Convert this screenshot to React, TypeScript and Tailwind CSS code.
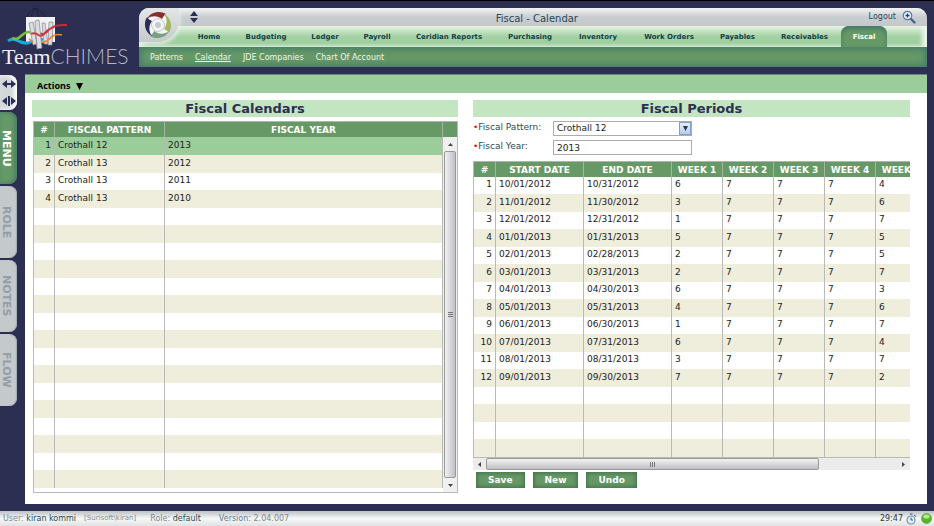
import React from "react";

const navItems = [
  "Home", "Budgeting", "Ledger", "Payroll", "Ceridian Reports", "Purchasing",
  "Inventory", "Work Orders", "Payables", "Receivables", "Fiscal",
];
const subItems = ["Patterns", "Calendar", "JDE Companies", "Chart Of Account"];
const sideTabs = ["MENU", "ROLE", "NOTES", "FLOW"];

const calendars = [
  ["Crothall 12", "2013"],
  ["Crothall 13", "2012"],
  ["Crothall 13", "2011"],
  ["Crothall 13", "2010"],
];

const periods = [
  ["10/01/2012", "10/31/2012", "6", "7", "7", "7", "4"],
  ["11/01/2012", "11/30/2012", "3", "7", "7", "7", "6"],
  ["12/01/2012", "12/31/2012", "1", "7", "7", "7", "7"],
  ["01/01/2013", "01/31/2013", "5", "7", "7", "7", "5"],
  ["02/01/2013", "02/28/2013", "2", "7", "7", "7", "5"],
  ["03/01/2013", "03/31/2013", "2", "7", "7", "7", "7"],
  ["04/01/2013", "04/30/2013", "6", "7", "7", "7", "3"],
  ["05/01/2013", "05/31/2013", "4", "7", "7", "7", "6"],
  ["06/01/2013", "06/30/2013", "1", "7", "7", "7", "7"],
  ["07/01/2013", "07/31/2013", "6", "7", "7", "7", "4"],
  ["08/01/2013", "08/31/2013", "3", "7", "7", "7", "7"],
  ["09/01/2013", "09/30/2013", "7", "7", "7", "7", "2"],
];

function Logo() {
  return (
    <div className="w-[139px] shrink-0 pt-[7px]">
      <svg className="ml-[7px] block" width="62" height="43" viewBox="0 0 62 43" fill="none">
        <path d="M28 1C23 4 20 8 19 12M28 1C26 5 24 7 24 14M28 1C31 5 32 8 32 14M28 1C34 4 38 8 39 12" stroke="#17182f" strokeWidth="0.7" />
        <rect x="19" y="10" width="29" height="25" fill="#f1f2f4" />
        <path d="M1 34C9 28 14 40 24 35S30 30 36 33" stroke="#18a8dc" strokeWidth="3" />
        <path d="M5 31C13 35 15 24 22 25S27 31 32 28" stroke="#78bd3c" strokeWidth="2.6" />
        <path d="M29 23C36 32 41 23 46 20S55 18 60 18" stroke="#c32b3b" strokeWidth="2" />
        <path d="M33 35C43 37 43 25 55 28" stroke="#ef8732" strokeWidth="1.6" />
        <g fill="#dcdde0" stroke="#85878f" strokeWidth="0.7">
          <path d="M22 16l4-1 4 22-4 1zM28 14l4-1 3 28-5 1zM35 16l3 0 3 21-4 0zM42 15l4 0-1 23-4 0z" />
        </g>
        <path d="M24 27C31 23 32 33 37 27S44 22 48 19" stroke="#cf3440" strokeWidth="2" />
        <path d="M22 32l4 3M36 35C42 35 43 30 47 28" stroke="#ef8732" strokeWidth="1.6" />
      </svg>
      <div className="-mt-[6px] flex items-baseline leading-[24px] whitespace-nowrap">
        <span className="pl-[2px] font-['Liberation_Serif',serif] text-[22px] text-[#f0f0f4]">Team</span>
        <span className="font-['Lato',sans-serif] text-[21px] font-light text-[#b5b6c0]">CHIMES</span>
      </div>
    </div>
  );
}

const swirlArms = [
  { angle: 0, color: "#84302c" },
  { angle: 90, color: "#a4b563" },
  { angle: 180, color: "#77a281" },
  { angle: 270, color: "#292c5b" },
];

function Swirl() {
  return (
    <svg width="30" height="30" viewBox="0 0 30 30">
      <circle cx="15" cy="15" r="12" fill="#f4f5f6" />
      {swirlArms.map((a) => (
        <g key={a.angle} transform={`rotate(${a.angle} 15 15)`}>
          <path d="M4 9C7 2 17 0 23 4C21 5 20 7 19 9C15 6 9 5 4 9Z" fill={a.color} />
          <path d="M10 11C13 8 17 8 19 10" fill="none" stroke="#bfc4c8" strokeWidth="1" />
        </g>
      ))}
      <circle cx="15" cy="15" r="3" fill="#c6cacd" />
    </svg>
  );
}

function Header() {
  return (
    <header className="min-w-0 flex-1 pt-[8px] pr-[7px]">
      <div className="relative overflow-hidden rounded-t-[10px] bg-[#c6cacc]">
        <div className="flex h-[18px] items-center bg-linear-to-b from-[#f3f4f4] via-[#c9cdcf] to-[#c3c8ca] pr-[11px] pl-[50px] text-[#294858]">
          <button className="flex w-[60px]" aria-label="Toggle header">
            <svg width="10" height="12" viewBox="0 0 10 12" fill="#2c2f55"><path d="M1 5L5 0l4 5zM1 7h8L5 12z" /></svg>
          </button>
          <h1 className="flex-1 pt-[3px] pr-[44px] text-center text-[10px] leading-[15px]">Fiscal - Calendar</h1>
          <a href="#logout" className="text-[8px]">Logout</a>
          <button className="ml-[6px]" aria-label="Zoom">
            <svg width="14" height="14" viewBox="0 0 14 14" fill="none">
              <path d="M9 9l3.500 3.500" stroke="#3d6685" strokeWidth="2.400" strokeLinecap="round" />
              <circle cx="5.500" cy="5.500" r="4.200" fill="#e8f2fa" stroke="#5a7d98" strokeWidth="1.200" />
              <path d="M3.500 5.500h4M5.500 3.500v4" stroke="#1f4467" strokeWidth="1.300" />
            </svg>
          </button>
        </div>
        <div className="bg-linear-to-b from-[#e3f2e2] via-[#a4d1a3] to-[#9bcd9b] pr-[40px] pl-[46px] shadow-[inset_-5px_0_4px_#eaf5ea,inset_5px_0_4px_#dfeedd]">
          <nav className="grid h-[21px] grid-cols-[48fr_66fr_52fr_52fr_92fr_70fr_66fr_76fr_61fr_73fr_46fr] text-[7px] font-bold text-[#123f49]">
            {navItems.map((n) => (
              <a
                key={n}
                href={"#" + n}
                className={
                  "flex items-center justify-center whitespace-nowrap pt-[2px] " +
                  (n === "Fiscal" ? "rounded-t-[8px] bg-[#669966] text-white shadow-[inset_0_3px_4px_#44796a]" : "")
                }
              >
                {n}
              </a>
            ))}
          </nav>
        </div>
        <div className="absolute top-0 left-0 flex h-[34px] w-[40px] items-start rounded-br-[22px] bg-linear-to-b from-[#e4e6e7] to-[#c6cacc] pt-[2px] pl-[4px] shadow-[1px_2px_4px_#e6f2e6]">
          <Swirl />
        </div>
      </div>
      <nav className="flex h-[20px] items-center gap-[12px] bg-[#669966] pt-px pl-[11px] text-[8px] text-[#edf5ec] shadow-[inset_0_0_7px_2px_#44796a]">
        {subItems.map((s) => (
          <a key={s} href={"#" + s} className={s === "Calendar" ? "underline" : ""}>{s}</a>
        ))}
      </nav>
    </header>
  );
}

function SideTabs() {
  return (
    <aside className="flex w-[25px] shrink-0 flex-col gap-[2px] pt-px pr-[8px]">
      <div className="flex h-[35px] flex-col items-center justify-around rounded-r-[8px] bg-[#d4d7da] shadow-[inset_-3px_0_4px_#ffffff]">
        <button aria-label="Resize panel">
          <svg width="14" height="10" viewBox="0 0 14 10" fill="#2c2f55"><path d="M0 5l5-4v3h4V1l5 4-5 4V6H5v3z" /></svg>
        </button>
        <button aria-label="Split panel">
          <svg width="14" height="10" viewBox="0 0 14 10" fill="#2c2f55"><path d="M0 5l5-4v8zM14 5L9 1v8zM6 0h2v10H6z" /></svg>
        </button>
      </div>
      {sideTabs.map((t) => (
        <button
          key={t}
          className={
            "flex h-[72px] items-center justify-center rounded-r-[8px] pr-[4px] text-[11px] font-bold leading-[13px] [writing-mode:vertical-rl] " +
            (t === "MENU"
              ? "bg-[#669966] text-white shadow-[inset_-2px_0_5px_#44796a]"
              : "bg-[#c4c9cb] text-[#929fa4] shadow-[inset_-1px_0_1px_#a5abb0]")
          }
        >
          {t}
        </button>
      ))}
    </aside>
  );
}

function PanelTitle({ children }: { children: React.ReactNode }) {
  return <h2 className="bg-[#c3e5c1] text-center text-[13px] leading-[17px] font-bold text-[#2d2f52]">{children}</h2>;
}

type GridProps = { headings: string[]; widths: string[]; rows: string[][]; total: number; selected?: number; className: string };

function DataGrid({ headings, widths, rows, total, selected, className }: GridProps) {
  const all = Array.from({ length: total }, (_, i) => rows[i]);
  return (
    <table className={"table-fixed border-separate border-spacing-0 text-[9px] text-[#222222] " + className}>
      <colgroup>
        {widths.map((w, i) => <col key={i} className={w} />)}
      </colgroup>
      <thead>
        <tr className="h-[16px] bg-[#669966] text-white">
          {headings.map((h) => (
            <th key={h} className="border-t border-r border-t-[#b0b5ae] border-r-[#a5b4a4] p-0 pt-px leading-[14px] whitespace-nowrap">{h}</th>
          ))}
        </tr>
      </thead>
      <tbody>
        {all.map((r, i) => (
          <tr key={i} className={i === selected ? "h-[18px] bg-[#9bcd9b]" : i % 2 ? "h-[18px] bg-[#efeddc]" : "h-[17px] bg-white"}>
            {headings.map((h, c) => (
              <td
                key={h}
                className={"border-r border-[#b9b9b5] px-[3px] pt-0 pb-[2px] leading-[15px] whitespace-nowrap " + (c === 0 ? "text-right" : "")}
              >
                {r ? (c === 0 ? i + 1 : r[c - 1]) : null}
              </td>
            ))}
          </tr>
        ))}
      </tbody>
    </table>
  );
}

function VerticalScrollbar() {
  return (
    <div className="flex w-[14px] shrink-0 flex-col bg-[#f0f0f0]">
      <div className="h-[16px] border-t border-[#b0b5ae] bg-[#669966]" />
      <button className="flex h-[14px] items-center justify-center" aria-label="Scroll up">
        <svg width="5" height="3" viewBox="0 0 5 3"><path d="M0 3L2.500 0 5 3z" fill="#444" /></svg>
      </button>
      <div className="mx-px flex flex-1 flex-col items-center justify-center gap-px rounded-[2px] border border-[#999999] bg-linear-to-r from-[#f2f2f2] via-[#d9d9dc] to-[#c0c0c4]">
        <i className="h-px w-[5px] bg-[#777]" />
        <i className="h-px w-[5px] bg-[#777]" />
        <i className="h-px w-[5px] bg-[#777]" />
      </div>
      <button className="flex h-[14px] items-center justify-center" aria-label="Scroll down">
        <svg width="5" height="3" viewBox="0 0 5 3"><path d="M0 0h5L2.500 3z" fill="#444" /></svg>
      </button>
    </div>
  );
}

function HorizontalScrollbar() {
  return (
    <div className="flex h-[13px] border-t border-[#b9b9b5] bg-[#ececec]">
      <button className="flex w-[13px] items-center justify-center" aria-label="Scroll left">
        <svg width="3" height="5" viewBox="0 0 3 5"><path d="M3 0v5L0 2.500z" fill="#444" /></svg>
      </button>
      <div className="flex flex-1">
        <div className="flex w-[81%] items-center justify-center gap-px rounded-[2px] border border-[#999999] bg-linear-to-b from-[#f2f2f2] via-[#d9d9dc] to-[#c0c0c4]">
          <i className="h-[5px] w-px bg-[#777]" />
          <i className="h-[5px] w-px bg-[#777]" />
          <i className="h-[5px] w-px bg-[#777]" />
        </div>
      </div>
      <button className="flex w-[13px] items-center justify-center" aria-label="Scroll right">
        <svg width="3" height="5" viewBox="0 0 3 5"><path d="M0 0v5l3-2.500z" fill="#444" /></svg>
      </button>
    </div>
  );
}

function CalendarsPanel() {
  return (
    <section className="min-w-0">
      <PanelTitle>Fiscal Calendars</PanelTitle>
      <div className="mt-[4px] ml-px flex border-x border-b border-[#b9b9b9]">
        <div className="min-w-0 flex-1 pb-[4px]">
          <DataGrid
            className="w-full"
            headings={["#", "FISCAL PATTERN", "FISCAL YEAR"]}
            widths={["w-[21px]", "w-[110px]", "w-auto"]}
            rows={calendars}
            total={20}
            selected={0}
          />
        </div>
        <VerticalScrollbar />
      </div>
    </section>
  );
}

function PeriodsPanel() {
  return (
    <section className="min-w-0">
      <PanelTitle>Fiscal Periods</PanelTitle>
      <div className="mt-[4px] grid grid-cols-[80px_139px] gap-y-[4px] text-[9px] leading-[13px] text-[#2c4a55]">
        <label htmlFor="pattern" className="whitespace-nowrap"><span className="text-[#f01010]">•</span>Fiscal Pattern:</label>
        <div className="relative">
          <select id="pattern" defaultValue="Crothall 12" className="block h-[15px] w-full appearance-none border border-[#adadad] bg-white pl-[3px] text-[#222222]">
            <option>Crothall 12</option>
            <option>Crothall 13</option>
          </select>
          <span className="pointer-events-none absolute top-px right-px flex h-[13px] w-[12px] items-center justify-center border border-[#7f9fd0] bg-linear-to-b from-[#e4eefb] to-[#b7cdec]">
            <svg width="5" height="5" viewBox="0 0 5 5"><path d="M0 0h5L2.500 5z" fill="#2b3550" /></svg>
          </span>
        </div>
        <label htmlFor="year" className="whitespace-nowrap"><span className="text-[#f01010]">•</span>Fiscal Year:</label>
        <input id="year" defaultValue="2013" className="block h-[15px] w-full border border-[#adadad] bg-white pl-[3px] text-[#222222]" />
      </div>
      <div className="mt-[6px] overflow-hidden border-l border-[#b9b9b5]">
        <DataGrid
          className="w-[453px] min-w-full"
          headings={["#", "START DATE", "END DATE", "WEEK 1", "WEEK 2", "WEEK 3", "WEEK 4", "WEEK 5"]}
          widths={["w-[22px]", "w-[88px]", "w-[88px]", "w-[51px]", "w-[51px]", "w-[51px]", "w-[51px]", "w-[51px]"]}
          rows={periods}
          total={16}
        />
      </div>
      <HorizontalScrollbar />
      <div className="mt-[2px] flex gap-[8px] pl-[3px]">
        {["Save", "New", "Undo"].map((b) => (
          <button key={b} className="h-[16px] bg-[#669966] px-[12px] text-[9px] leading-[16px] font-bold text-white shadow-[inset_0_0_4px_1px_#3f7048]">{b}</button>
        ))}
      </div>
    </section>
  );
}

function StatusBar() {
  return (
    <footer className="flex h-[15px] items-center bg-linear-to-b from-[#bcc1c5] via-[#f7f8f8] to-[#dfe2e3] pr-[2px] pl-[3px] text-[8px] whitespace-nowrap text-[#7f888c]">
      <span>User: <span className="text-[#1f4a4a]">kiran kommi</span></span>
      <span className="ml-[8px] text-[7px]">[Surisoft\kiran]</span>
      <span className="ml-[14px]">Role: <span className="text-[#1f4a4a]">default</span></span>
      <span className="ml-[18px]"><span className="text-[#5d7896]">Version:</span> 2.04.007</span>
      <span className="ml-auto text-[#333333]">29:47</span>
      <svg className="ml-[3px]" width="11" height="12" viewBox="0 0 11 12" fill="none">
        <circle cx="5" cy="7" r="4" fill="#e2f1fb" stroke="#7193ab" strokeWidth="1.200" />
        <path d="M5 4.500V7h2M4 1h2.500M8 2l2 1.500" stroke="#315874" />
      </svg>
      <svg className="ml-[4px]" width="11" height="11" viewBox="0 0 11 11">
        <circle cx="5.500" cy="5.500" r="5" fill="#55b52a" stroke="#66a84a" strokeWidth="0.800" />
        <ellipse cx="5.500" cy="3.500" rx="3.200" ry="2" fill="#b5ea8c" />
      </svg>
    </footer>
  );
}

export default function App() {
  return (
    <div className="flex min-h-screen flex-col border-t border-black bg-[#2d2f52] font-['DejaVu_Sans',Verdana,sans-serif]">
      <div className="-mt-px flex h-[74px]">
        <Logo />
        <Header />
      </div>
      <div className="flex flex-1 pr-[7px] pb-[7px]">
        <SideTabs />
        <main className="min-w-0 flex-1 bg-white pb-[11px]">
          <div className="h-[19px] border-t border-[#6b8579] bg-[#9bcd9b] pl-[12px]">
            <button className="flex items-center gap-[6px] pt-[3px] font-['Noto_Sans',sans-serif] text-[9px] leading-[16px] font-bold text-black">
              Actions
              <svg width="7" height="7" viewBox="0 0 7 7"><path d="M0 0h7L3.500 7z" fill="black" /></svg>
            </button>
          </div>
          <div className="mt-[7px] grid grid-cols-[426fr_437fr] gap-[15px] pr-[17px] pl-[7px]">
            <CalendarsPanel />
            <PeriodsPanel />
          </div>
        </main>
      </div>
      <StatusBar />
    </div>
  );
}
